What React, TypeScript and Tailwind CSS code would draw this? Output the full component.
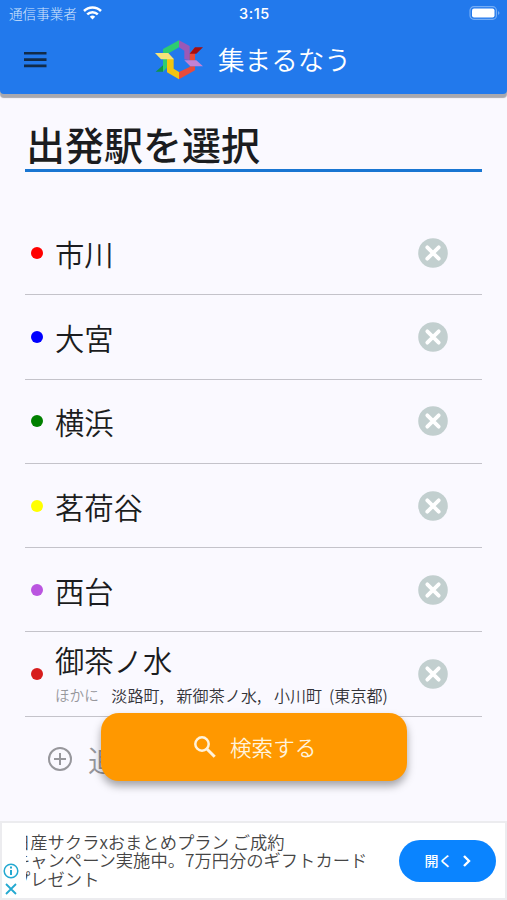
import React from 'react';

type Station = {
	name: string;
	dot: string;
	others?: string[];
};

const stations: Station[] = [
	{ name: '市川', dot: 'bg-[#ff0000]' },
	{ name: '大宮', dot: 'bg-[#0000ff]' },
	{ name: '横浜', dot: 'bg-[#008000]' },
	{ name: '茗荷谷', dot: 'bg-[#ffff00]' },
	{ name: '西台', dot: 'bg-[#ba55e0]' },
	{ name: '御茶ノ水', dot: 'bg-[#d71d1d]', others: ['淡路町,', '新御茶ノ水,', '小川町 (東京都)'] },
];

function Logo() {
	return (
		<svg className="h-[42px] w-12 shrink-0" viewBox="0 0 144 126">
			<path fill="#2ecc71" d="M24 30 72 4v21L42 42H24z" />
			<path fill="#2ecc71" d="M24 60h16v22L24 98z" />
			<path fill="#119447" d="M2 98 24 79v19z" />
			<path fill="#9b59b6" d="m72 4 32 17v43l-16-3V35L72 25z" />
			<path fill="#e74c3c" d="m104 44 16-19v40h-16z" />
			<path fill="#a50f0f" d="m104 44 16-19h24l-20 19z" />
			<path fill="#e74c3c" d="M104 82h16v12l-48 27V99l32-15z" />
			<path fill="#f1c40f" d="M36 59h20v30l16 10v22L36 100z" />
			<path fill="#f7e379" d="M0 42h40l17 19H18z" />
			<path fill="#c283d6" d="M88 64h36l20 18h-38z" />
		</svg>
	);
}

function Header() {
	return (
		<header className="h-[94px] shrink-0 rounded-b-[4px] bg-[#2279ec] text-white shadow-[0_4px_1px_#a8a8af]">
			<div className="flex h-7 items-center justify-between pr-[7px] pl-[9px]">
				<div className="flex w-[202px] items-center gap-[6px] pb-[2px] text-[13.6px] font-light text-[#d4e5fc]">
					通信事業者
					<svg className="h-[14px] w-[19px]" viewBox="0 0 19 14" fill="none" stroke="#fff" strokeWidth="2.5">
						<path d="M1 5a12 12 0 0 1 17 0" />
						<path d="M4.2 8.4a7.6 7.6 0 0 1 10.6 0" />
						<path d="m6.8 10.7 2.7 2.8 2.7-2.8a4 4 0 0 0-5.4 0z" fill="#fff" stroke="none" />
					</svg>
				</div>
				<div className="font-[Inter] text-[14.5px] font-medium tracking-[0.6px]">3:15</div>
				<div className="flex w-[202px] justify-end pb-[2px]">
					<svg className="h-[14px] w-[31px]" viewBox="0 0 31 14">
						<rect x="1" y="0.7" width="26.4" height="12.6" rx="3.8" fill="none" stroke="#75adf5" strokeWidth="1.2" />
						<rect x="3" y="2.5" width="22.5" height="9" rx="2" fill="#fff" />
						<path d="M29 5v4q3-2 0-4z" fill="#75adf5" />
					</svg>
				</div>
			</div>
			<div className="flex h-[64px] items-center pl-6">
				<svg className="h-4 w-[23px]" viewBox="0 0 23 16" fill="#112b49">
					<path d="M0 0h22.5v2.6H0zM0 6.3h22.5v2.6H0zM0 12.6h22.5v2.6H0z" />
				</svg>
				<div className="ml-[108px] flex items-center gap-[15px]">
					<Logo />
					<h1 className="pb-[2px] text-[26.6px] leading-none font-[350] whitespace-nowrap">集まるなう</h1>
				</div>
			</div>
		</header>
	);
}

function RemoveIcon() {
	return (
		<svg className="h-[30px] w-[30px]" viewBox="0 0 30 30">
			<circle cx="15" cy="15" r="14.8" fill="#c2cfcf" />
			<path d="m9.3 9.3 11.4 11.4M20.7 9.3 9.3 20.7" stroke="#fff" strokeWidth="3.8" strokeLinecap="round" />
		</svg>
	);
}

function StationRow({ station }: { station: Station }) {
	return (
		<li className="flex h-[84.3px] items-center border-b border-[#c4c3ca] pr-[34px] pl-[6px]">
			<span className={`h-3 w-3 shrink-0 rounded-full ${station.dot}`} />
			<div className="ml-3 flex-1 font-[350] whitespace-nowrap">
				<p className={station.others ? 'text-[29.3px] leading-[40px]' : 'text-[29.3px] leading-[40px]'}>{station.name}</p>
				{station.others && (
					<p className="mt-[2px] flex h-[28px] items-center gap-[12.5px] text-[16px] text-[#333338]">
						<span className="text-[14.6px] text-[#97979c]">ほかに</span>
						{station.others.map((name) => (
							<span key={name} className="tracking-[0.1px] [word-spacing:3px]">{name}</span>
						))}
					</p>
				)}
			</div>
			<button type="button">
				<RemoveIcon />
			</button>
		</li>
	);
}

function SearchButton() {
	return (
		<button
			type="button"
			className="absolute top-[713px] left-[101px] flex h-[68px] w-[306px] items-center rounded-[18px] bg-[#ff9800] pl-[93px] text-[21.6px] font-[350] text-[#fff3dc] shadow-[0_5px_9px_rgba(0,0,0,0.35)]"
		>
			<svg className="mr-[14px] h-[22px] w-[22px]" viewBox="0 0 22 22" fill="none" stroke="#fff3dc" strokeWidth="2.5">
				<circle cx="8" cy="8" r="6.7" />
				<path d="m12.7 12.7 8 8" strokeWidth="3" />
			</svg>
			検索する
		</button>
	);
}

function AdBanner() {
	return (
		<div className="relative flex h-[79px] items-center justify-between border-2 border-[#ececef] bg-white pr-[9px]">
			<div className="ml-[24px] w-[350px] overflow-hidden">
				<p className="-ml-[13px] text-[17.3px] leading-[18.4px] font-[350] whitespace-nowrap text-[#454545]">
					日産サクラxおまとめプラン ご成約
					<br />
					キャンペーン実施中。7万円分のギフトカード
					<br />
					プレゼント
				</p>
			</div>
			<button type="button" className="flex h-[42px] w-[97px] items-center justify-center gap-[10px] rounded-full bg-[#0a84ff] text-[14px] font-medium text-white">
				開く
				<svg className="h-3 w-2" viewBox="0 0 8 12" fill="none" stroke="#fff" strokeWidth="2.4">
					<path d="m1 1 5 5-5 5" />
				</svg>
			</button>
			<svg className="absolute bottom-0 left-0 h-[36px] w-[18px]" viewBox="0 0 18 36" fill="none" stroke="#24a9d1" strokeWidth="1.5">
				<circle cx="9" cy="9" r="6.8" />
				<path d="M9 8v5M9 4.5v2" strokeWidth="2" />
				<path d="m4 22 10 10M14 22 4 32" strokeWidth="1.8" />
			</svg>
		</div>
	);
}

export default function App() {
	return (
		<div className="relative flex h-[900px] w-[507px] flex-col overflow-hidden bg-[#faf9ff] font-['Noto_Sans_CJK_JP',sans-serif] text-[#1b1c20]">
			<Header />
			<main className="flex-1 px-[25px]">
				<h2 className="mt-[25px] h-[53px] border-b-[3px] border-[#1976d2] pl-[1px] text-[39px] leading-[49px] font-medium">
					出発駅を選択
				</h2>
				<ul className="mt-[39px]">
					{stations.map((station) => (
						<StationRow key={station.name} station={station} />
					))}
				</ul>
				<div className="mt-[20px] flex items-center gap-4 pl-[23px] text-[29px] leading-[44px] font-[350] text-[#97979c]">
					<svg className="h-[24px] w-[24px]" viewBox="0 0 24 24" fill="none" stroke="#97979c" strokeWidth="2">
						<circle cx="12" cy="12" r="11" />
						<path d="M12 6v12M6 12h12" />
					</svg>
					追加
				</div>
			</main>
			<SearchButton />
			<AdBanner />
		</div>
	);
}
